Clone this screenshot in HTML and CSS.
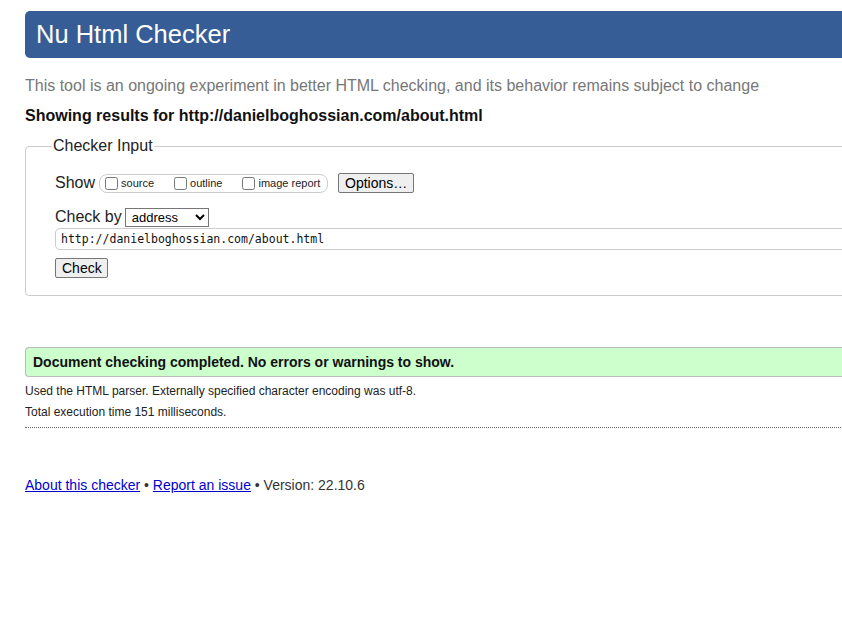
FILE: index.html
```html
<!DOCTYPE html>
<html>
<head>
<meta charset="utf-8">
<title>Nu Html Checker</title>
<link rel="stylesheet" href="styles.css">
</head>
<body>
<div class="page">
  <h1 class="header">Nu Html Checker</h1>
  <p class="tagline">This tool is an ongoing experiment in better HTML checking, and its behavior remains subject to change</p>
  <p class="showing">Showing results for http://danielboghossian.com/about.html</p>
  <fieldset class="input-box">
    <legend>Checker Input</legend>
    <div class="row show-row">
      <span class="lbl">Show</span>
      <span class="opts">
        <label><input type="checkbox"> source</label>
        <label><input type="checkbox"> outline</label>
        <label><input type="checkbox">image report</label>
      </span>
      <button class="btn options">Options…</button>
    </div>
    <div class="row by-row">
      <span class="lbl">Check by</span>
      <select class="sel"><option>address</option></select>
    </div>
    <input class="url" type="text" value="http://danielboghossian.com/about.html">
    <div class="row"><button class="btn check">Check</button></div>
  </fieldset>
  <div class="success">Document checking completed. No errors or warnings to show.</div>
  <p class="details first">Used the HTML parser. Externally specified character encoding was utf-8.</p>
  <p class="details">Total execution time 151 milliseconds.</p>
  <hr class="dots">
  <p class="footer"><a href="#">About this checker</a> • <a href="#">Report an issue</a> • Version: 22.10.6</p>
</div>
</body>
</html>
```
FILE: styles.css
```css
html, body { margin: 0; padding: 0; overflow: hidden; background: #fff; }
body { font-family: "Liberation Sans", Arial, sans-serif; color: #222; }
.page { padding: 11px 0 0 25px; width: 900px; }
.header {
  margin: 0;
  background: #365d95;
  color: #fff;
  font-weight: normal;
  font-size: 25.5px;
  height: 47px;
  line-height: 46px;
  padding-left: 11px;
  border-radius: 5px 0 0 5px;
}
.tagline { margin: 18px 0 0; font-size: 16px; color: #777; line-height: 20px; }
.showing { margin: 10px 0 0; font-size: 16px; font-weight: bold; line-height: 20px; color: #111; }
.input-box {
  margin: 11px 0 0;
  border: 1px solid #ccc;
  border-radius: 4px;
  padding: 15px 0 17px 29px;
}
.input-box legend { font-size: 16px; padding: 0 1px; margin-left: -3px; color: #222; }
.row { display: flex; align-items: center; }
.lbl { font-size: 16px; color: #222; }
.show-row { margin-top: 3px; height: 20px; }
.opts {
  display: inline-flex;
  align-items: center;
  margin-left: 4px;
  border: 1px solid #ccc;
  border-radius: 8px;
  height: 17px;
  width: 222px;
  padding-left: 5px;
  box-sizing: content-box;
}
.opts label { font-size: 11px; display: inline-flex; align-items: center; margin-right: 20px; color: #222; }
.opts label:last-child { margin-right: 0; }
.opts input { margin: 0 3px 0 0; width: 13px; height: 13px; }
.btn {
  font-family: "Liberation Sans", Arial, sans-serif;
  font-size: 13px;
  background: #efefef;
  border: 1px solid #767676;
  border-radius: 2px;
  color: #000;
  padding: 0 6px;
  height: 20px;
}
.options { margin-left: 10px; width: 76px; font-size: 14px; }
.by-row { margin-top: 14px; height: 20px; }
.sel {
  margin-left: 3px;
  font-family: "Liberation Sans", Arial, sans-serif;
  font-size: 13px;
  width: 84px;
  height: 19px;
  border: 1px solid #767676;
  border-radius: 0;
  background: #fff;
  color: #000;
  padding: 0 0 0 2px;
}
.url {
  display: block;
  margin-top: 1px;
  width: 820px;
  height: 22px;
  box-sizing: border-box;
  border: 1px solid #ccc;
  border-radius: 5px;
  font-family: "DejaVu Sans Mono", "Liberation Mono", monospace;
  font-size: 11.5px;
  padding: 0 5px;
  color: #111;
}
.check { margin-top: 8px; width: 53px; font-size: 14px; }
.success {
  margin-top: 51px;
  background: #ccffcc;
  border: 1px solid #bbb;
  border-right: 0;
  border-radius: 4px 0 0 4px;
  height: 28px;
  line-height: 28px;
  padding-left: 7px;
  font-size: 14px;
  font-weight: bold;
  color: #111;
}
.details { margin: 0; font-size: 12px; line-height: 21px; color: #222; }
.details.first { margin-top: 4px; }
.dots { margin: 4px 0 0; border: 0; border-top: 1px dotted #666; height: 0; }
.footer { margin: 49px 0 0; font-size: 14px; color: #333; }
.footer a { color: #00c; }
```
